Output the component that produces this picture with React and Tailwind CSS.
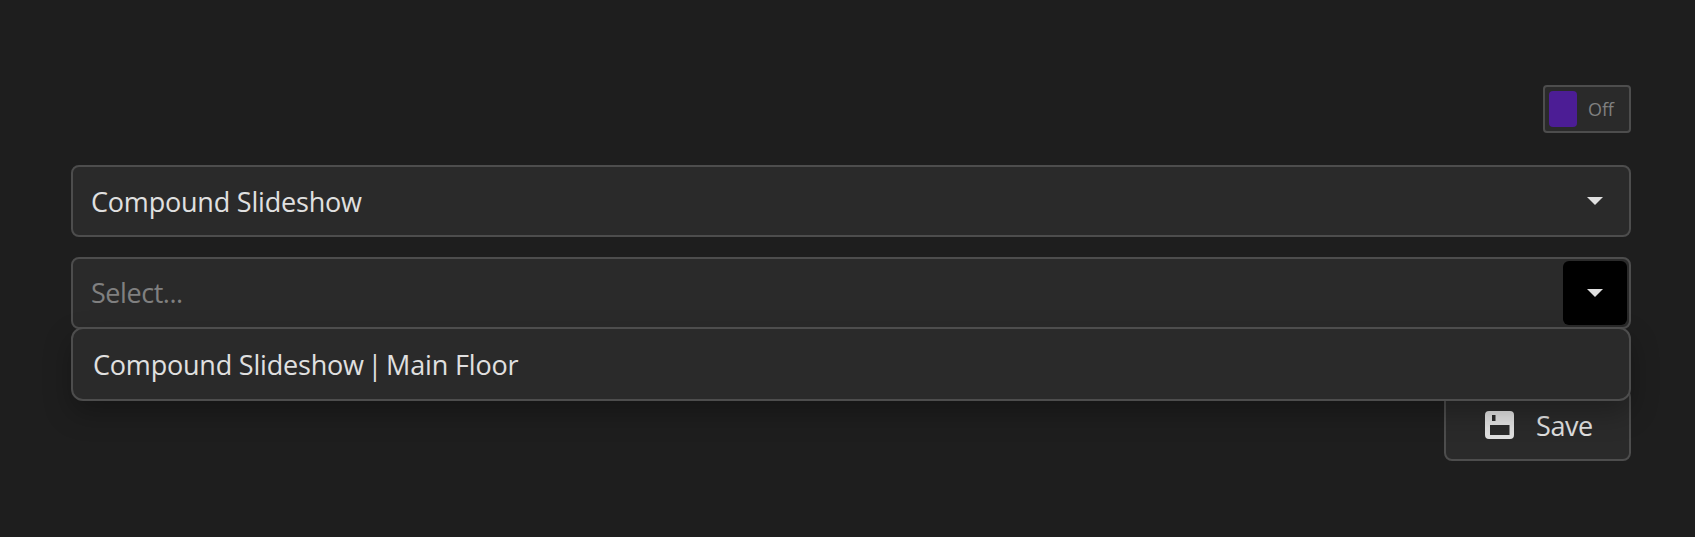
import React from "react";

function Caret() {
  return (
    <svg width="16" height="8" viewBox="0 0 16 8" className="fill-[#e0e0e0]" aria-hidden="true">
      <path d="M0 0H16L8 8Z" />
    </svg>
  );
}

function SaveIcon() {
  return (
    <svg width="29" height="28" viewBox="0 0 29 28" className="fill-[#e0e0e0]" aria-hidden="true">
      <path
        fillRule="evenodd"
        d="M4 0H25Q29 0 29 4V24Q29 28 25 28H4Q0 28 0 24V4Q0 0 4 0ZM7 4V10H10.5V4ZM5 14V24H24.5V14Z"
      />
    </svg>
  );
}

function SelectBox({ children, muted, active }) {
  return (
    <div className="flex h-[72px] items-center justify-between rounded-lg border-2 border-[#4d4d4d] bg-[#2a2a2a] pr-0.5 pl-[18px]">
      <span className={muted ? "tracking-[-0.45px] text-[#808080]" : "pt-0.5 text-[#e0e0e0]"}>{children}</span>
      <button
        className={
          active
            ? "flex size-16 items-center justify-center rounded-md bg-black"
            : "flex size-16 items-center justify-center rounded-md"
        }
      >
        <Caret />
      </button>
    </div>
  );
}

export default function App() {
  return (
    <main className="flex h-[537px] flex-col bg-[#1e1e1e] pt-[85px] pr-16 pl-[71px] font-['Open_Sans','Noto_Sans',sans-serif] text-[27px] leading-9 tracking-[-0.2px] text-[#e0e0e0]">
      <button className="flex h-12 w-[88px] items-center self-end rounded-sm border-2 border-[#4d4d4d] bg-[#2a2a2a] p-1">
        <span className="h-9 w-7 rounded bg-[#4c1d95]" />
        <span className="ml-[11px] text-lg tracking-[-0.1px] text-[#808080]">Off</span>
      </button>
      <div className="mt-8 flex flex-col gap-5">
        <SelectBox>Compound Slideshow</SelectBox>
        <div className="relative">
          <SelectBox muted active>Select...</SelectBox>
          <div className="absolute inset-x-0 top-[70px] flex h-[74px] items-center rounded-xl border-2 border-[#4d4d4d] bg-[#2a2a2a] pt-0.5 pl-5 shadow-[0_12px_28px_rgba(0,0,0,0.27)]">
            <span className="whitespace-pre">
              Compound Slideshow <span className="-mx-[3px]">|</span> <span className="tracking-[-0.15px]">Main Floor</span>
            </span>
          </div>
        </div>
      </div>
      <button className="mt-[60px] flex h-[72px] w-[187px] items-center gap-[22px] self-end rounded-lg border-2 border-[#4d4d4d] bg-[#2a2a2a] pl-[39px]">
        <SaveIcon />
        <span className="pt-0.5 tracking-[-0.4px]">Save</span>
      </button>
    </main>
  );
}
